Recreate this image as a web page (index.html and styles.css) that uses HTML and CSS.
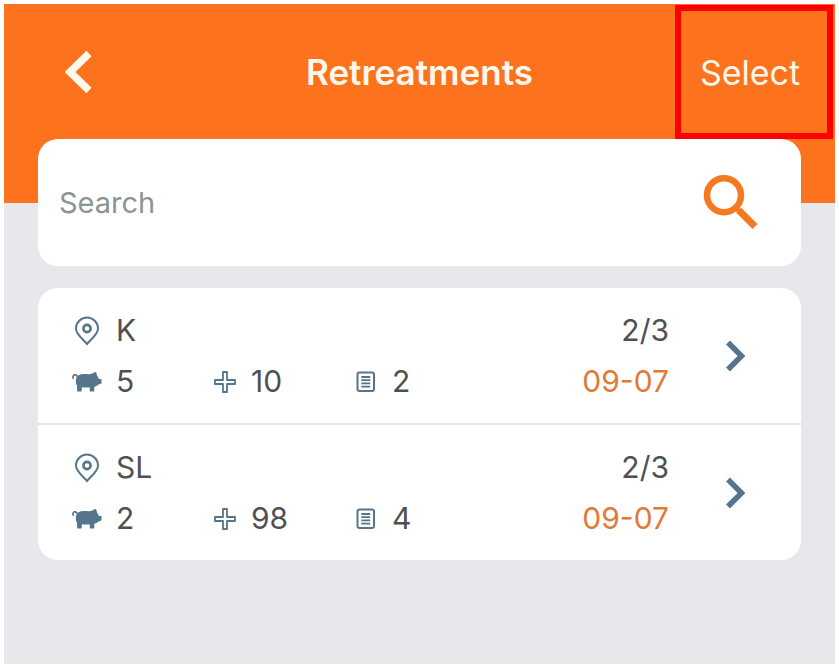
FILE: index.html
```html
<!DOCTYPE html>
<html lang="en">
<head>
    <meta charset="UTF-8">
    <meta name="viewport" content="width=device-width, initial-scale=1.0">
    <title>Retreatments</title>
    <link rel="stylesheet" href="styles.css">
</head>
<body>
    <!-- shared icons -->
    <svg class="sprite" aria-hidden="true">
        <symbol id="icon-pin" viewBox="0 0 30 30">
            <path d="M15 28C10.500 22.500 4 18.500 4 12.500A11 11 0 0 1 26 12.500C26 18.500 19.500 22.500 15 28Z" fill="none" stroke="currentColor" stroke-width="2"/>
            <circle cx="15" cy="12.500" r="3.600" fill="none" stroke="currentColor" stroke-width="2.600"/>
        </symbol>
        <symbol id="icon-pig" viewBox="0 0 30 22">
            <path d="M4 8.500C4.500 4.500 8 3 12 3C15 3 17 3.500 20 2.800C21 1.600 23 1.500 24 .8L25 4.500C26 5.500 26.300 7 27 8H29.500V12.500C28 13 27 13.500 26 13.700C25 15 23.500 15.500 22.300 15.800V20.500H17.800V16.300C15 16.600 12.500 16.500 10 16.200L9.500 20.500H5.200L5 15C4 13 3.600 11 4 8.500Z" fill="currentColor"/>
            <path d="M5.500 5.500C4 3.500 2 3.300 1.200 4.800C.6 6 1 7 1.500 7.800" fill="none" stroke="currentColor" stroke-width="1.600"/>
        </symbol>
        <symbol id="icon-plus" viewBox="0 0 24 24">
            <path d="M10 2H14V10H22V14H14V22H10V14H2V10H10Z" fill="none" stroke="currentColor" stroke-width="1.800" stroke-linejoin="round"/>
        </symbol>
        <symbol id="icon-list" viewBox="0 0 24 24">
            <rect x="3.500" y="2.500" width="16.500" height="18.500" rx="2" fill="none" stroke="currentColor" stroke-width="2"/>
            <path d="M7.300 7H16.200M7.300 10.200H16.200M7.300 13.400H16.200M7.300 16.600H16.200" stroke="currentColor" stroke-width="1.800"/>
        </symbol>
        <symbol id="icon-next" viewBox="0 0 20 32">
            <path d="M2 2.500L15.500 16L2 29.500" fill="none" stroke="currentColor" stroke-width="5.500"/>
        </symbol>
    </svg>

    <div class="screen">
        <header class="header">
            <button type="button" class="back" aria-label="Back">
                <svg width="28" height="44" viewBox="0 0 28 44"><path d="M25 3.500L6 22L25 40.500" fill="none" stroke="currentColor" stroke-width="7.500"/></svg>
            </button>
            <h1 class="title">Retreatments</h1>
            <button type="button" class="select">Select</button>
        </header>

        <main class="content">
            <form class="search">
                <input type="search" class="search-input" placeholder="Search" aria-label="Search">
                <button type="submit" class="search-button" aria-label="Submit search">
                    <svg width="56" height="56" viewBox="0 0 56 56" fill="none" stroke="currentColor">
                        <circle cx="21" cy="20.300" r="17" stroke-width="6.500"/>
                        <path d="M32 32L37 37" stroke-width="4"/>
                        <path d="M35.500 35L52 51.500" stroke-width="7"/>
                    </svg>
                </button>
            </form>

            <ul class="list">
                <li>
                    <a href="#" class="row">
                        <span class="details">
                            <span class="stat place"><svg class="icon-large"><use href="#icon-pin"/></svg>K</span>
                            <span class="stat"><svg class="icon-large"><use href="#icon-pig"/></svg>5</span>
                            <span class="stat"><svg class="icon"><use href="#icon-plus"/></svg>10</span>
                            <span class="stat"><svg class="icon"><use href="#icon-list"/></svg>2</span>
                        </span>
                        <span class="progress">
                            <span>2/3</span>
                            <span class="date">09-07</span>
                        </span>
                        <svg class="next"><use href="#icon-next"/></svg>
                    </a>
                </li>
                <li>
                    <a href="#" class="row">
                        <span class="details">
                            <span class="stat place"><svg class="icon-large"><use href="#icon-pin"/></svg>SL</span>
                            <span class="stat"><svg class="icon-large"><use href="#icon-pig"/></svg>2</span>
                            <span class="stat"><svg class="icon"><use href="#icon-plus"/></svg>98</span>
                            <span class="stat"><svg class="icon"><use href="#icon-list"/></svg>4</span>
                        </span>
                        <span class="progress">
                            <span>2/3</span>
                            <span class="date">09-07</span>
                        </span>
                        <svg class="next"><use href="#icon-next"/></svg>
                    </a>
                </li>
            </ul>
        </main>
    </div>
</body>
</html>
```
FILE: styles.css
```css
* {
    box-sizing: border-box;
}

body {
    margin: 0;
    padding: 4px 4px 3px;
    min-height: 100vh;
    display: flex;
    background-color: #fff;
    color: #505052;
    font-family: Inter, "Liberation Sans", sans-serif;
    font-size: 30px;
}

button {
    padding: 0;
    border: none;
    background: none;
    color: #fff8ec;
    font-family: inherit;
    cursor: pointer;
}

svg {
    display: block;
    flex: none;
}

.sprite {
    display: none;
}

.screen {
    flex: 1;
    background-color: #e6e8eb;
}

.header {
    display: grid;
    grid-template-columns: 1fr auto 1fr;
    align-items: center;
    padding: 1px 2px 64px;
    background-color: #fd721c;
}

.back {
    justify-self: start;
    margin-left: 58px;
}

.title {
    margin: 0;
    color: #fff8ec;
    font-size: 35px;
    font-weight: 600;
}

.select {
    justify-self: end;
    width: 158px;
    height: 134px;
    padding-right: 8px;
    border: 6px solid #fe0000;
    font-size: 34px;
}

.content {
    margin-top: -64px;
    padding: 0 34px;
}

.search {
    display: flex;
    align-items: center;
    height: 127px;
    padding: 0 42px 0 21px;
    border-radius: 20px;
    background-color: #fff;
}

.search-input {
    flex: 1;
    min-width: 0;
    padding: 0;
    border: none;
    outline: none;
    background: none;
    color: inherit;
    font-family: inherit;
    font-size: 29px;
}

.search-input::placeholder {
    color: #8b9496;
    opacity: 1;
}

.search-button {
    color: #f47920;
}

.list {
    margin: 22px 0 0;
    padding: 0;
    list-style: none;
    border-radius: 20px;
    background-color: #fff;
}

.list li + li {
    border-top: 2px solid #e4e6e9;
}

.row {
    display: flex;
    align-items: center;
    padding: 17px 55px 16px 34px;
    color: inherit;
    line-height: 51px;
    text-decoration: none;
}

.details {
    flex: 1;
    display: grid;
    grid-template-columns: 141px 141px 1fr;
}

.stat {
    display: flex;
    align-items: center;
    gap: 14px;
}

.place {
    grid-column: 1 / -1;
}

.icon,
.icon-large {
    width: 24px;
    height: 24px;
    color: #55758c;
}

.icon-large {
    width: 30px;
    height: 30px;
}

.progress {
    display: flex;
    flex-direction: column;
    align-items: flex-end;
}

.date {
    color: #e17a35;
}

.next {
    width: 20px;
    height: 32px;
    margin-left: 57px;
    color: #55758c;
}
```
